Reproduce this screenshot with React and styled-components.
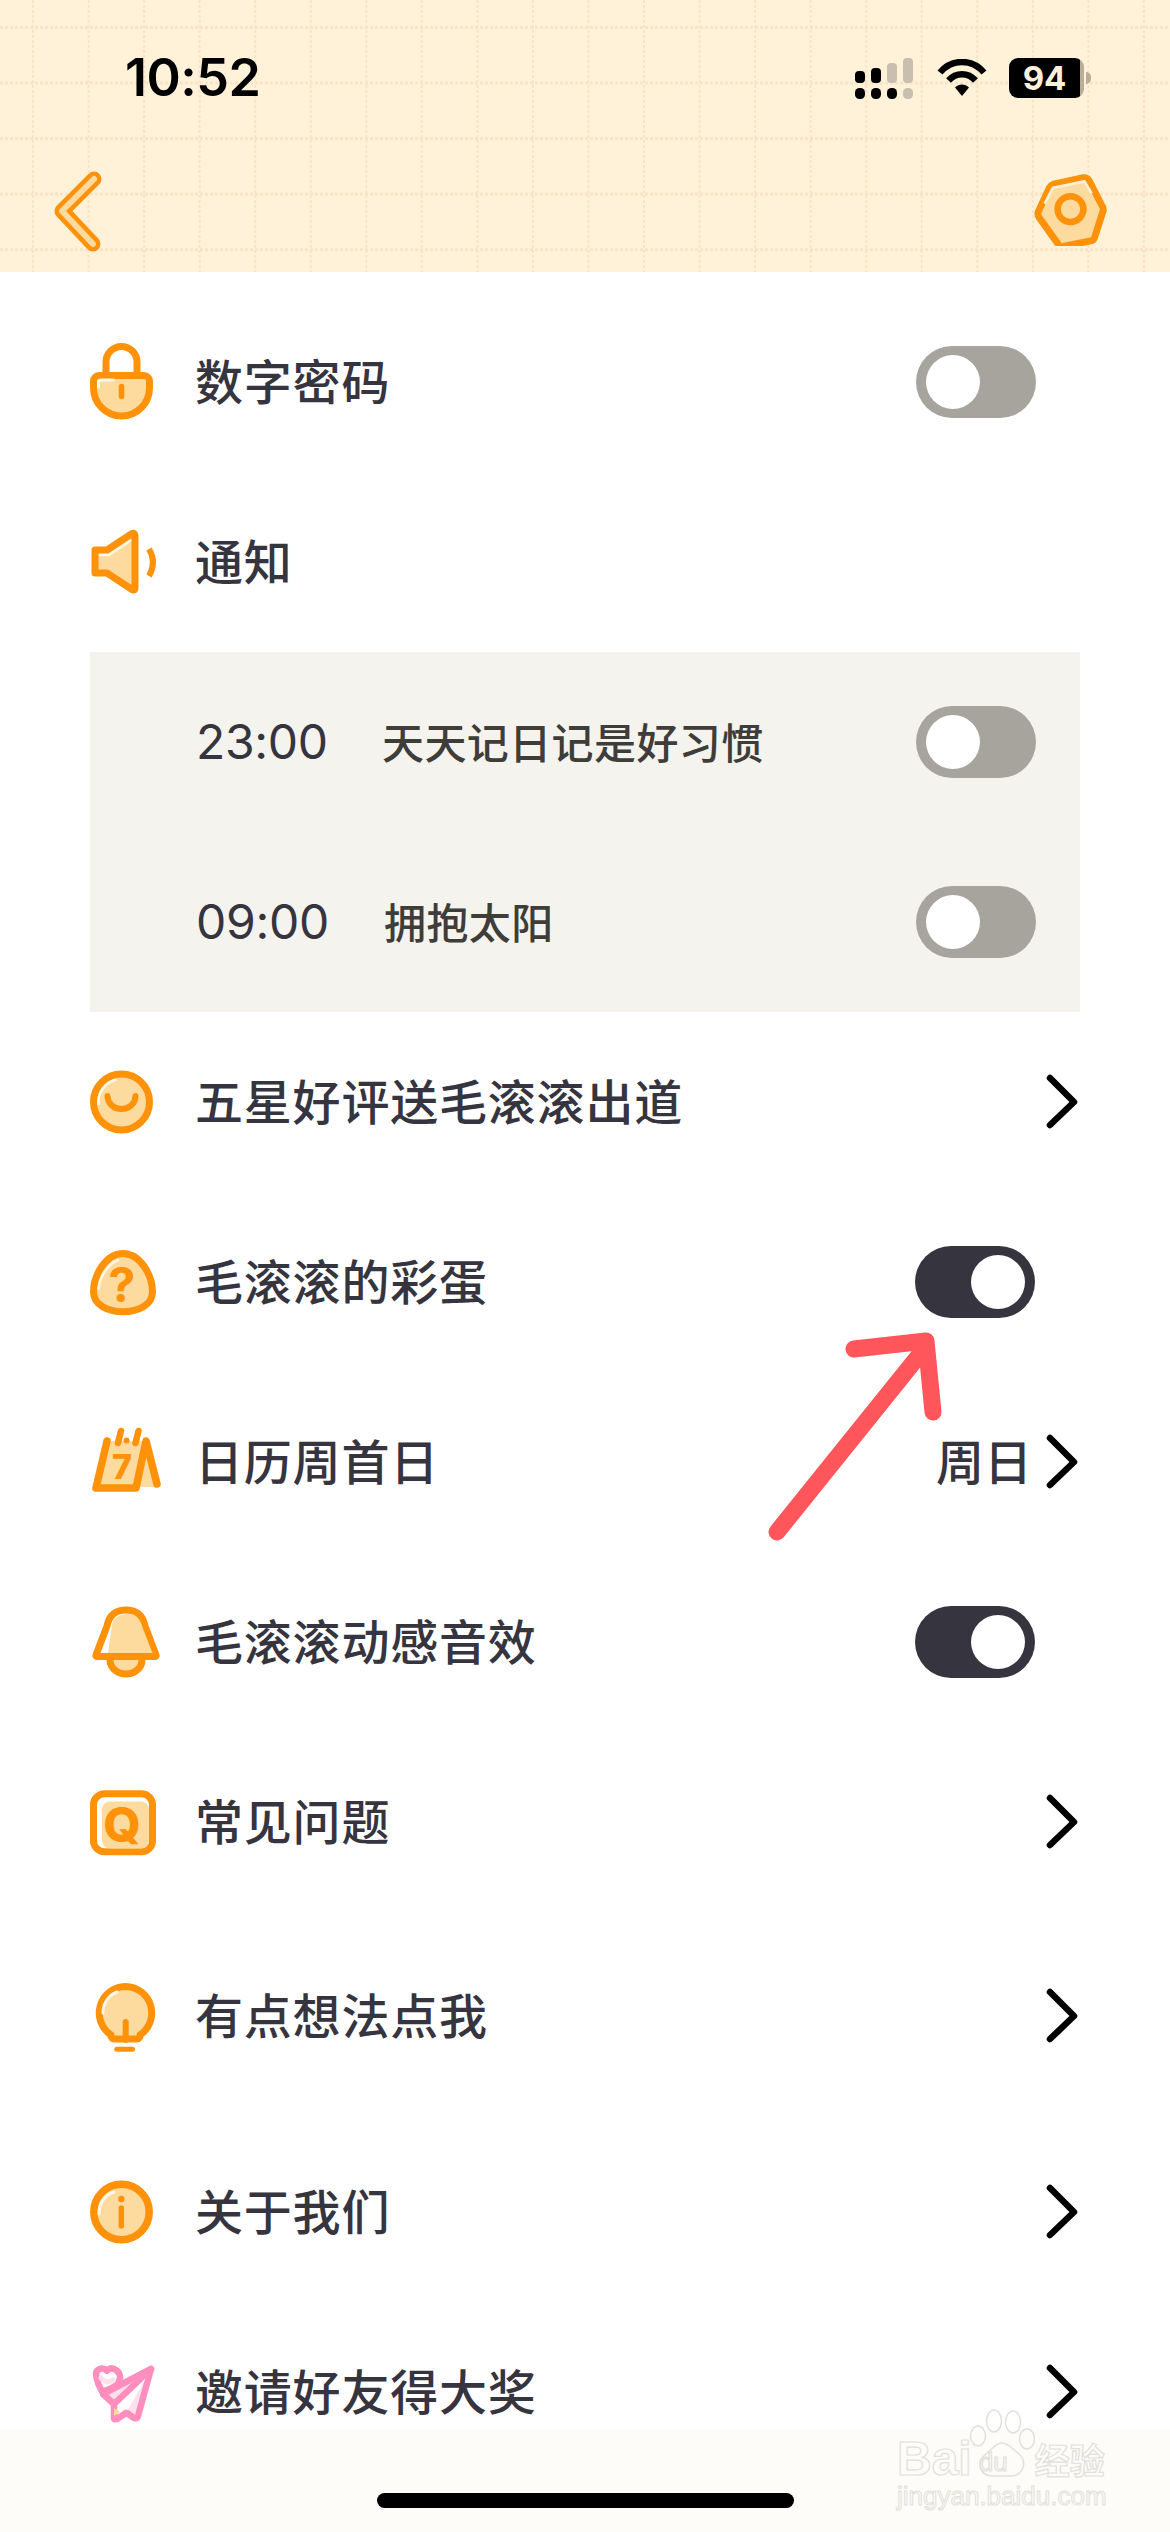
import React from "react";
import styled, { createGlobalStyle } from "styled-components";

const ORANGE = "#ff9209";
const LIGHT = "#fdda9e";
const INK = "#35343f";
const CJK = `"Noto Sans CJK SC", "Noto Sans", sans-serif`;

const Global = createGlobalStyle`
  html, body { margin: 0; padding: 0; background: #fff; }
  * { box-sizing: border-box; }
`;

const Page = styled.div`
  position: relative;
  width: 1170px;
  height: 2532px;
  overflow: hidden;
  background: #fff;
  font-family: ${CJK};
  color: ${INK};
`;

const Header = styled.header`
  position: relative;
  height: 272px;
  background: #fff2d8;
  display: flex;
  flex-direction: column;
  &::before, &::after {
    content: "";
    position: absolute;
    inset: 0;
  }
  &::before {
    background: linear-gradient(90deg, #f9e3c6 2px, transparent 2px) 32px 0 / 55.55px 100%;
    mask-image: repeating-linear-gradient(180deg, #000 0 3px, transparent 3px 5px);
  }
  &::after {
    background: linear-gradient(180deg, #f9e3c6 3px, transparent 3px) 0 26px / 100% 55.55px;
    mask-image: repeating-linear-gradient(90deg, #000 0 3px, transparent 3px 5px);
  }
`;

const StatusBar = styled.div`
  position: relative;
  z-index: 1;
  height: 56px;
  margin-top: 50px;
  padding: 0 86px 0 125px;
  display: flex;
  align-items: center;
  justify-content: space-between;
`;

const Clock = styled.span`
  font: 600 52px/56px Inter, sans-serif;
  color: #000;
  letter-spacing: -0.5px;
`;

const StatusIcons = styled.div`
  display: flex;
  align-items: center;
`;

const Battery = styled.div`
  position: relative;
  width: 75px;
  height: 40px;
  margin-left: 22px;
  border-radius: 9px;
  background: linear-gradient(90deg, #000 71px, #b8ae9b 71px);
  display: flex;
  align-items: center;
  justify-content: center;
  padding-right: 4px;
  font: 700 33px/40px Inter, sans-serif;
  color: #fdf1d8;
  &::after {
    content: "";
    position: absolute;
    right: -7px;
    top: 14px;
    width: 5px;
    height: 12px;
    border-radius: 0 6px 6px 0;
    background: #b8ae9b;
  }
`;

const NavBar = styled.nav`
  position: relative;
  z-index: 1;
  height: 96px;
  margin-top: 56px;
  padding: 0 62px 0 50px;
  display: flex;
  align-items: center;
  justify-content: space-between;
`;

const List = styled.main`
  display: flex;
  flex-direction: column;
  padding: 20px 90px 0;
`;

const Row = styled.div`
  height: ${(p) => p.$h || 180}px;
  display: flex;
  align-items: center;
  flex: none;
`;

const IconSlot = styled.div`
  width: 105px;
  flex: none;
  display: flex;
  align-items: center;
`;

const Label = styled.span`
  flex: 1;
  margin-bottom: 6px;
  font-size: 48px;
  line-height: 60px;
  font-weight: 500;
  letter-spacing: 0.8px;
  color: ${INK};
`;

const Value = styled.span`
  margin-bottom: 6px;
  font-size: 48px;
  line-height: 60px;
  font-weight: 500;
  margin-right: 12px;
  color: ${INK};
`;

const Panel = styled.section`
  background: #f4f3ee;
  height: 360px;
  display: flex;
  flex-direction: column;
`;

const PanelRow = styled.div`
  height: 180px;
  display: flex;
  align-items: center;
  padding-left: 106px;
`;

const Time = styled.span`
  width: ${(p) => p.$w || 186}px;
  flex: none;
  font: 400 48px/60px Inter, sans-serif;
  letter-spacing: -0.3px;
  color: ${INK};
`;

const Habit = styled.span`
  flex: 1;
  margin-bottom: 3px;
  font-size: 42px;
  line-height: 60px;
  font-weight: 500;
  letter-spacing: 0.4px;
  color: #3e3d39;
`;

const Track = styled.div`
  width: 120px;
  height: 72px;
  flex: none;
  border-radius: 36px;
  margin-right: ${(p) => (p.$on ? 45 : 44)}px;
  padding: 9px 10px;
  display: flex;
  justify-content: ${(p) => (p.$on ? "flex-end" : "flex-start")};
  background: ${(p) => (p.$on ? INK : "#a7a49e")};
`;

const Knob = styled.span`
  width: 54px;
  height: 54px;
  border-radius: 50%;
  background: #fff;
`;

const Footer = styled.footer`
  position: absolute;
  left: 0;
  right: 0;
  bottom: 0;
  height: 102px;
  background: #fdfcf8;
  display: flex;
  justify-content: center;
  padding-top: 63px;
`;

const HomeBar = styled.div`
  width: 417px;
  height: 15px;
  border-radius: 8px;
  background: #000;
`;

const Annotation = styled.svg`
  position: absolute;
  left: 750px;
  top: 1320px;
  pointer-events: none;
`;

const Watermark = styled.div`
  position: absolute;
  left: 897px;
  top: 2405px;
  width: 215px;
  display: flex;
  flex-direction: column;
  color: transparent;
  -webkit-text-stroke: 1.2px #e2e0dc;
  font-family: "Liberation Sans", sans-serif;
`;

const WatermarkTop = styled.div`
  height: 74px;
  display: flex;
  align-items: flex-end;
`;

const BaiText = styled.span`
  font-size: 48px;
  line-height: 40px;
  font-weight: 700;
`;

const Paw = styled.div`
  position: relative;
  width: 66px;
  height: 70px;
  margin-left: -3px;
  flex: none;
`;

const DuText = styled.span`
  position: absolute;
  left: 10px;
  bottom: 3px;
  font-size: 26px;
  line-height: 28px;
  font-weight: 400;
`;

const Jing = styled.span`
  font-family: ${CJK};
  font-size: 35px;
  line-height: 40px;
  font-weight: 700;
`;

const Domain = styled.span`
  margin-top: 2px;
  font-size: 26px;
  line-height: 30px;
  -webkit-text-stroke-width: 1px;
`;

const SvgText = styled.text`
  font-family: Inter, "Liberation Sans", sans-serif;
  font-weight: ${(p) => p.$w || 800};
  fill: ${ORANGE};
  text-anchor: middle;
`;

const Ico = ({ children, w = 72, h = 80 }) => (
  <svg width={w} height={h} viewBox={`0 0 ${w} ${h}`} fill="none" strokeLinecap="round" strokeLinejoin="round">
    {children}
  </svg>
);

const LockIcon = () => (
  <Ico>
    <path d="M16 33V20a15.500 15.500 0 0 1 31 0v13" stroke={ORANGE} strokeWidth="7" />
    <path d="M9 33.500h45a5.500 5.500 0 0 1 5.500 5.500v7a28 28 0 0 1-56 0v-7a5.500 5.500 0 0 1 5.500-5.500z" fill={LIGHT} stroke={ORANGE} strokeWidth="7" />
    <path d="M8.500 45v-4q0-3 3-3h12" stroke="#fff7ea" strokeWidth="3" />
    <path d="M31.500 44.500v10" stroke={ORANGE} strokeWidth="5.600" />
  </Ico>
);

const SpeakerIcon = () => (
  <Ico>
    <path d="M5 28h12l25-16.500q3-1 3 2.500v52q0 3-3 1.500L17 51H5z" fill={LIGHT} stroke={ORANGE} strokeWidth="7" />
    <path d="M10 33h9l21-14" stroke="#fff7ea" strokeWidth="2.500" />
    <path d="M59 27q8 13 0 27" stroke={ORANGE} strokeWidth="6" strokeLinecap="butt" />
  </Ico>
);

const SmileIcon = () => (
  <Ico>
    <circle cx="31.500" cy="40" r="28" fill={LIGHT} stroke={ORANGE} strokeWidth="7" />
    <path d="M8.500 42a23 23 0 0 1 17-24" stroke="#fff7ea" strokeWidth="2.500" />
    <path d="M17.500 34a14 13 0 0 0 28 0" stroke={ORANGE} strokeWidth="6" />
  </Ico>
);

const EggIcon = () => (
  <Ico>
    <path d="M33 11.500C50 11.500 62.500 33 62.500 50 62.500 63 48 69.700 33 69.700S3.500 63 3.500 50C3.500 33 16 11.500 33 11.500z" fill={LIGHT} stroke={ORANGE} strokeWidth="7" />
    <path d="M8.500 47C10 34 18 22 28 18" stroke="#fff7ea" strokeWidth="2.500" />
    <SvgText x="32" y="60" fontSize="48" $w={700}>?</SvgText>
  </Ico>
);

const CalendarIcon = () => (
  <Ico>
    <path d="M57 18l10 47H47z" fill={LIGHT} />
    <path d="M17 19H55L47 66H6z" fill={LIGHT} />
    <path d="M16 24L8 62" stroke="#fff7ea" strokeWidth="4" />
    <path d="M17 19L6 66H46L56 19L67 62" stroke={ORANGE} strokeWidth="7.500" />
    <path d="M28 21l3-12M45.500 21l3-12" stroke={ORANGE} strokeWidth="6.500" />
    <circle cx="36.500" cy="18.500" r="3" fill={ORANGE} />
    <SvgText x="32" y="57" fontSize="34" $w={800}>7</SvgText>
  </Ico>
);

const BellIcon = () => (
  <Ico>
    <path d="M20 58a16 14 0 0 0 32 0" fill={LIGHT} stroke={ORANGE} strokeWidth="7" />
    <path d="M36 8c11 0 17 6 19 16l11 29a1 1 0 0 1-1 1.500H7a1 1 0 0 1-1-1.500l11-29C19 14 25 8 36 8z" fill="#fff" stroke={ORANGE} strokeWidth="7" />
    <path d="M37 12c9.500 0 13.500 5.500 15.500 13.500l10 25.500H18l4-28c1.500-7 7-11 15-11z" fill={LIGHT} />
  </Ico>
);

const QIcon = () => (
  <Ico>
    <rect x="3.500" y="11.800" width="59" height="58" rx="11" fill="#fff" stroke={ORANGE} strokeWidth="7" />
    <rect x="12" y="19.500" width="47" height="47" rx="8" fill={LIGHT} />
    <SvgText x="32" y="59.500" fontSize="48" $w={800}>Q</SvgText>
  </Ico>
);

const BulbIcon = () => (
  <Ico>
    <path d="M35.500 10.500A26.500 26.500 0 0 0 21 59v1a3 3 0 0 0 3 3h23a3 3 0 0 0 3-3v-1a26.500 26.500 0 0 0-14.500-48.500z" fill={LIGHT} stroke={ORANGE} strokeWidth="7" />
    <path d="M13 37a22 22 0 0 1 14-21" stroke="#fff7ea" strokeWidth="3" />
    <path d="M35.700 46v18" stroke={ORANGE} strokeWidth="6" />
    <rect x="24.300" y="70.700" width="20.700" height="5" rx="2.500" fill={ORANGE} />
  </Ico>
);

const InfoIcon = () => (
  <Ico>
    <circle cx="31.500" cy="40" r="27.700" fill={LIGHT} stroke={ORANGE} strokeWidth="7.500" />
    <path d="M9 42a22 22 0 0 1 15-22" stroke="#fff7ea" strokeWidth="3" />
    <circle cx="31.300" cy="27" r="3.200" fill={ORANGE} />
    <path d="M31.300 36v18" stroke={ORANGE} strokeWidth="5.500" />
  </Ico>
);

const PlaneIcon = () => {
  const P = "#ff8dbd";
  return (
    <Ico>
      <path d="M61 17L13 42l11 10 20 14q3 1 4-2z" fill="#fde0ec" stroke={P} strokeWidth="6.500" />
      <path d="M61 17L24 52v14q0 2 3 1l9-6" stroke={P} strokeWidth="6.500" fill="#fff" />
      <path d="M24 56v8l6-4z" fill={LIGHT} />
      <path d="M30 24c-1-7-10-11-14-5-5-4-12 0-10 6 1 5 4 10 8 15 5-2 11-5 15-10z" fill="#fff" stroke={P} strokeWidth="6.500" transform="rotate(8 18 26)" />
      <path d="M11 26c3 4 8 5 12 2" fill="none" stroke="#fde0ec" strokeWidth="5" />
    </Ico>
  );
};

const Chevron = () => (
  <svg width="36" height="60" viewBox="0 0 36 60" fill="none" stroke="#000" strokeWidth="6.500" strokeLinecap="round" strokeLinejoin="round">
    <path d="M6 6l24 24L6 53" />
  </svg>
);

const Toggle = ({ on }) => (
  <Track $on={on}>
    <Knob />
  </Track>
);

const rows1 = [
  { icon: <SmileIcon />, label: "五星好评送毛滚滚出道", chevron: true },
  { icon: <EggIcon />, label: "毛滚滚的彩蛋", toggle: true },
  { icon: <CalendarIcon />, label: "日历周首日", value: "周日", chevron: true },
  { icon: <BellIcon />, label: "毛滚滚动感音效", toggle: true },
  { icon: <QIcon />, label: "常见问题", chevron: true },
  { icon: <BulbIcon />, label: "有点想法点我", chevron: true, h: 208 },
  { icon: <InfoIcon />, label: "关于我们", chevron: true, h: 184 },
  { icon: <PlaneIcon />, label: "邀请好友得大奖", chevron: true, h: 176 },
];

export default function App() {
  return (
    <Page>
      <Global />
      <Header>
        <StatusBar>
          <Clock>10:52</Clock>
          <StatusIcons>
            <svg width="60" height="42" viewBox="0 0 60 42" fill="#000" style={{ marginRight: 22 }}>
              <rect x="0" y="14" width="10" height="12" rx="4" />
              <rect x="16" y="11" width="10" height="15" rx="4" />
              <rect x="32" y="6" width="10" height="20" rx="4" fill="#c8bfae" />
              <rect x="48" y="1" width="10" height="25" rx="4" fill="#c8bfae" />
              <rect x="0" y="31" width="10" height="11" rx="4.500" />
              <rect x="16" y="31" width="10" height="11" rx="4.500" />
              <rect x="32" y="31" width="10" height="11" rx="4.500" />
              <rect x="48" y="31" width="10" height="11" rx="4.500" fill="#c8bfae" />
            </svg>
            <svg width="50" height="38" viewBox="0 0 50 38" fill="none" stroke="#000">
              <path d="M3 13.500C15-.5 35-.5 47 13.500" strokeWidth="6.500" />
              <path d="M11.500 21.500C19 13 31 13 38.500 21.500" strokeWidth="6.500" />
              <path d="M18 28.500L25 37l7-8.500c-4-4-10-4-14 0z" fill="#000" stroke="none" />
            </svg>
            <Battery>94</Battery>
          </StatusIcons>
        </StatusBar>
        <NavBar>
          <svg width="60" height="90" viewBox="0 0 60 90" fill="none" strokeLinecap="round" strokeLinejoin="round">
            <path d="M44 14L12 46l31 33" stroke={ORANGE} strokeWidth="15" />
            <path d="M44 14L12 46l31 33" stroke={LIGHT} strokeWidth="6" />
          </svg>
          <svg width="75" height="72" viewBox="0 0 78 78" fill="none" strokeLinejoin="round">
            <path d="M21 11l32-7q4-.5 6 3l15 29q1 3 0 5l-9 28q-1 3-4 3.500l-30 6q-3 .5-5-2L5 47q-2-3-1-6l12-26q2-3 5-4z" fill={LIGHT} stroke={ORANGE} strokeWidth="7.500" />
            <path d="M11 32l9-17 34-7 8 13" stroke="#fff0d8" strokeWidth="3" />
            <circle cx="39" cy="38" r="14" fill={LIGHT} stroke={ORANGE} strokeWidth="7" />
          </svg>
        </NavBar>
      </Header>

      <List>
        <Row>
          <IconSlot><LockIcon /></IconSlot>
          <Label>数字密码</Label>
          <Toggle />
        </Row>
        <Row>
          <IconSlot><SpeakerIcon /></IconSlot>
          <Label>通知</Label>
        </Row>
        <Panel>
          <PanelRow>
            <Time>23:00</Time>
            <Habit>天天记日记是好习惯</Habit>
            <Toggle />
          </PanelRow>
          <PanelRow>
            <Time $w={188}>09:00</Time>
            <Habit>拥抱太阳</Habit>
            <Toggle />
          </PanelRow>
        </Panel>
        {rows1.map((r) => (
          <Row key={r.label} $h={r.h}>
            <IconSlot>{r.icon}</IconSlot>
            <Label>{r.label}</Label>
            {r.value && <Value>{r.value}</Value>}
            {r.toggle && <Toggle on />}
            {r.chevron && <Chevron />}
          </Row>
        ))}
      </List>

      <Annotation width="220" height="240" viewBox="0 0 220 240" fill="none" stroke="#ff565b" strokeWidth="17" strokeLinecap="round" strokeLinejoin="round">
        <path d="M27 212L175 28" />
        <path d="M104 29l72-8 7 71" />
      </Annotation>

      <Footer>
        <HomeBar />
      </Footer>

      <Watermark>
        <WatermarkTop>
          <BaiText>Bai</BaiText>
          <Paw>
            <svg width="66" height="70" viewBox="0 0 66 70" fill="none" stroke="#e2e0dc" strokeWidth="1.500">
              <ellipse cx="9" cy="27" rx="7.500" ry="10" />
              <ellipse cx="25" cy="12" rx="7.500" ry="11" />
              <ellipse cx="44" cy="13" rx="7.500" ry="11" />
              <ellipse cx="58" cy="30" rx="7.500" ry="10" />
              <path d="M33 34c7 0 10 6 17 11 8 6 6 22-9 22H24C9 67 8 51 17 45c6-4 9-11 16-11z" />
            </svg>
            <DuText>du</DuText>
          </Paw>
          <Jing>经验</Jing>
        </WatermarkTop>
        <Domain>jingyan.baidu.com</Domain>
      </Watermark>
    </Page>
  );
}
